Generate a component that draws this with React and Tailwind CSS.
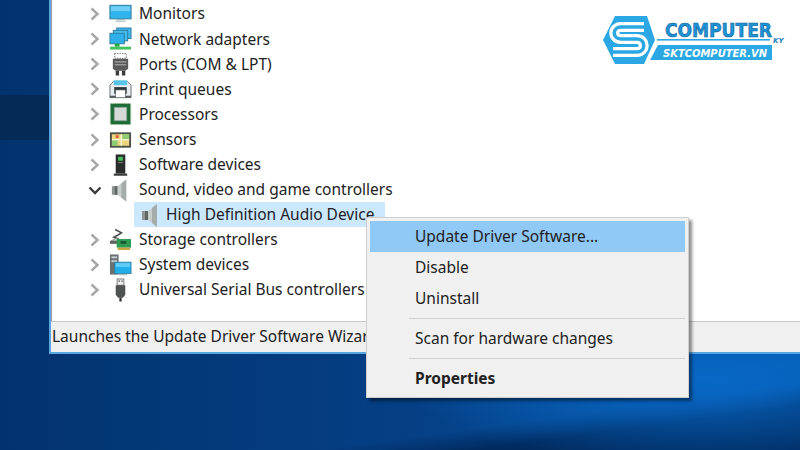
import React from "react";

const Chevron = ({ open }) => (
  <svg width="16" height="16" viewBox="0 0 16 16" className="shrink-0">
    {open ? (
      <path d="M1.5 5.5 L7 11 L12.5 5.5" fill="none" stroke="#3c3c3c" strokeWidth="2.4" />
    ) : (
      <path d="M3.5 2.5 L9.5 8 L3.5 13.5" fill="none" stroke="#a6a6a6" strokeWidth="2.4" />
    )}
  </svg>
);

const Monitor = () => (
  <svg width="24" height="24" viewBox="0 0 24 24">
    <rect x="1" y="3" width="22" height="14" fill="#2fb4ee" stroke="#3a86a8" strokeWidth="1.2" />
    <rect x="2" y="4" width="20" height="5" fill="#6ed0f5" />
    <rect x="8" y="17.5" width="8" height="1" fill="#8aa8b8" />
    <rect x="6.5" y="19" width="11" height="1.2" fill="#b4c4cc" />
  </svg>
);

const Network = () => (
  <svg width="24" height="24" viewBox="0 0 24 24">
    <rect x="8" y="0.5" width="15" height="11" fill="#3cb8ee" stroke="#2f7da0" />
    <rect x="4.5" y="3" width="15" height="11" fill="#45beef" stroke="#2f7da0" />
    <rect x="1" y="6" width="15" height="11" fill="#2fb0ea" stroke="#2f7da0" />
    <rect x="6" y="17" width="5" height="3" fill="#28a745" />
    <rect x="1" y="20" width="22" height="3" fill="#42c45c" />
  </svg>
);

const Port = () => (
  <svg width="24" height="24" viewBox="0 0 24 24">
    <rect x="6" y="1" width="12" height="5" fill="#fff" stroke="#777" strokeWidth="1" strokeDasharray="1.5 1" />
    <path d="M4 6.5 H20 V17 L17 19 H7 L4 17 Z" fill="#5a5a5a" />
    <rect x="6" y="9" width="12" height="1.5" fill="#9a9a9a" />
    <rect x="6" y="12" width="12" height="1.5" fill="#9a9a9a" />
    <rect x="7" y="19" width="3.5" height="5" fill="#3c3c3c" />
    <rect x="13.5" y="19" width="3.5" height="5" fill="#3c3c3c" />
  </svg>
);

const Printer = () => (
  <svg width="24" height="24" viewBox="0 0 24 24">
    <path d="M1 8 L5 4 H19 L23 8 V21 H1 Z" fill="#e8ecee" stroke="#6a7176" />
    <rect x="5" y="3" width="14" height="5" fill="#55c4e6" />
    <rect x="5.5" y="10" width="13" height="7" fill="#2f3a40" />
    <rect x="7" y="13" width="10" height="8" fill="#ffffff" stroke="#555" strokeWidth="0.6" />
    <rect x="1" y="19" width="6" height="2" fill="#55595c" />
    <rect x="17" y="19" width="6" height="2" fill="#55595c" />
  </svg>
);

const Cpu = () => (
  <svg width="24" height="24" viewBox="0 0 24 24">
    <rect x="1.5" y="1" width="21" height="22" fill="#1f6b38" />
    <rect x="1" y="1" width="22" height="22" fill="none" stroke="#bcd8a8" strokeWidth="0.8" strokeDasharray="1 1" />
    <rect x="5.5" y="5" width="13" height="14" fill="#d5dad7" stroke="#8aa596" strokeWidth="0.8" />
  </svg>
);

const Sensor = () => (
  <svg width="24" height="24" viewBox="0 0 24 24">
    <rect x="1" y="4" width="22" height="16" fill="#4b4f4a" />
    <rect x="3" y="6" width="18" height="12" fill="#ecd77e" />
    <rect x="3" y="12" width="6" height="6" fill="#8ecb72" />
    <rect x="14" y="6" width="7" height="5" fill="#8ecb72" />
    <rect x="7" y="7" width="3" height="3" fill="#e0563a" />
    <rect x="12" y="6" width="1.6" height="12" fill="#f6f1d0" />
    <rect x="3" y="11" width="18" height="1.4" fill="#f6f1d0" />
  </svg>
);

const Software = () => (
  <svg width="24" height="24" viewBox="0 0 24 24">
    <rect x="7" y="1" width="10" height="20" fill="#2a2d2b" />
    <rect x="9.5" y="3.5" width="5" height="4" fill="#45c25a" />
    <rect x="9.5" y="9" width="5" height="1" fill="#7d8a80" />
    <rect x="5" y="21" width="14" height="2.2" fill="#3a3a3a" />
  </svg>
);

const Speaker = () => (
  <svg width="24" height="24" viewBox="0 0 24 24">
    <path d="M3 8 H9 V17 H3 Z" fill="#8d9491" />
    <path d="M6 8 H9 V17 H6 Z" fill="#5f6663" />
    <path d="M9 8 L18 1 V24 L9 17 Z" fill="#c7cdca" />
    <path d="M13 5 L18 1 V24 L13 20 Z" fill="#a5acaa" />
  </svg>
);

const Storage = () => (
  <svg width="24" height="24" viewBox="0 0 24 24">
    <path d="M6.5 1 L13 4.5 L9 7 L5 9 L10 11" fill="none" stroke="#4a4f4d" strokeWidth="1.6" />
    <path d="M2 13 L8 10 L12 13 H4 Z" fill="#d9dedb" stroke="#555" strokeWidth="0.6" />
    <rect x="1" y="13" width="10" height="3" fill="#5c625f" />
    <rect x="8" y="11" width="15" height="9" fill="#2f9c54" />
    <rect x="12" y="13" width="6" height="3" fill="#1c5a33" />
    <rect x="9" y="20" width="13" height="2.4" fill="#c9a63c" />
  </svg>
);

const SystemDev = () => (
  <svg width="24" height="24" viewBox="0 0 24 24">
    <rect x="1" y="1" width="9" height="21" fill="#6a6f70" />
    <rect x="2.5" y="3" width="6" height="2" fill="#c9cfd0" />
    <rect x="2.5" y="7" width="6" height="2" fill="#c9cfd0" />
    <rect x="6" y="9" width="17" height="12" fill="#22aee8" stroke="#2d7a9c" strokeWidth="0.8" />
    <rect x="7" y="10" width="15" height="4" fill="#60cdf4" />
    <rect x="10" y="21.5" width="9" height="1.3" fill="#a9bcc6" />
  </svg>
);

const Usb = () => (
  <svg width="24" height="24" viewBox="0 0 24 24">
    <rect x="8.5" y="0.5" width="7" height="6.5" fill="#f0f0f0" stroke="#777" strokeWidth="1" />
    <rect x="10" y="2" width="1.5" height="1.5" fill="#666" />
    <rect x="12.8" y="2" width="1.5" height="1.5" fill="#666" />
    <path d="M7 7 H17 V17 L14.5 20 H9.5 L7 17 Z" fill="#4f5250" />
    <rect x="10.8" y="20" width="2.4" height="4" fill="#333" />
  </svg>
);

const Row = ({ icon: Icon, label, open }) => (
  <div className="flex h-[25.1px] items-center">
    <span className="flex w-[21px] shrink-0 items-center">
      <Chevron open={open} />
    </span>
    <span className="flex w-[23px] shrink-0 justify-center">
      <Icon />
    </span>
    <span className="ml-[7px] whitespace-nowrap">{label}</span>
  </div>
);

const Logo = () => (
  <svg width="190" height="56" viewBox="0 0 190 56" className="absolute left-[600px] top-[12px]">
    <path d="M15 4 H47 L55 28 L44 52 H15 L3 28 Z" fill="#2ba8e4" />
    <path d="M44 15 H21 C12 15 12 27 21 27 H37 C46 27 46 40 37 40 H13" fill="none" stroke="#fff" strokeWidth="10" />
    <path d="M44 15 H21 C12 15 12 27 21 27 H37 C46 27 46 40 37 40 H13" fill="none" stroke="#2ba8e4" strokeWidth="3.5" />
    <rect x="57" y="27" width="113" height="1.6" fill="#2ba8e4" />
    <path d="M58 33 H172 V48 H50 Z" fill="#2ba8e4" />
    <text x="65" y="25" textLength="107" lengthAdjust="spacingAndGlyphs" fontFamily="'DejaVu Sans'" fontWeight="700" fontSize="19" fill="#1e94d8" stroke="#0f5d92" strokeWidth="0.6">COMPUTER</text>
    <text x="173" y="31" fontFamily="'DejaVu Sans'" fontWeight="700" fontSize="7" fontStyle="italic" fill="#1e7fc0">KY</text>
    <text x="63" y="45" textLength="104" lengthAdjust="spacingAndGlyphs" fontFamily="'DejaVu Sans'" fontWeight="700" fontSize="10.5" fontStyle="italic" fill="#ffffff">SKTCOMPUTER.VN</text>
  </svg>
);

const MenuItem = ({ label, active, bold }) => (
  <div className={`flex h-[31px] items-center pl-[45px] ${active ? "bg-[#90c8f6]" : ""} ${bold ? "font-bold" : ""}`}>
    {label}
  </div>
);

const Sep = () => (
  <div className="flex h-[9px] items-center pl-[39px]">
    <div className="h-px w-full bg-[#d0d0d0]" />
  </div>
);

export default function App() {
  return (
    <div
      className="relative h-[450px] w-[800px] overflow-hidden bg-[radial-gradient(ellipse_300px_90px_at_88%_84%,#0868c6_0%,transparent_100%),linear-gradient(172deg,transparent_0%,transparent_88%,#012a5e_92%),linear-gradient(90deg,#03336e_0%,#053f84_50%,#0759ad_100%)] text-[15.5px] text-[#222]"
      style={{ fontFamily: "'Noto Sans', sans-serif" }}
    >
      <div className="absolute left-0 top-[95px] h-[45px] w-[49px] bg-[#062a56]" />
      <div className="relative ml-[49px] flex h-[354px] flex-col border-b-2 border-l-2 border-[#58a6e0]">
        <div className="flex-1 border-l border-[#a0a0a0] bg-white pl-[36px] pt-[1.5px]">
          <Row icon={Monitor} label="Monitors" />
          <Row icon={Network} label="Network adapters" />
          <Row icon={Port} label="Ports (COM & LPT)" />
          <Row icon={Printer} label="Print queues" />
          <Row icon={Cpu} label="Processors" />
          <Row icon={Sensor} label="Sensors" />
          <Row icon={Software} label="Software devices" />
          <Row icon={Speaker} label="Sound, video and game controllers" open />
          <div className="ml-[46px] flex h-[25.1px] w-[251px] items-center bg-[#cce8ff] pl-[5px]">
            <span className="flex w-[24px] shrink-0 justify-center">
              <Speaker />
            </span>
            <span className="ml-[3px] whitespace-nowrap">High Definition Audio Device</span>
          </div>
          <Row icon={Storage} label="Storage controllers" />
          <Row icon={SystemDev} label="System devices" />
          <Row icon={Usb} label="Universal Serial Bus controllers" />
        </div>
        <div className="flex h-[31px] items-center border-t border-[#c8c8c8] bg-[#f0f0f0] pl-[1px]">
          <span className="whitespace-nowrap">Launches the Update Driver Software Wizard for the selected device.</span>
        </div>
      </div>
      <Logo />
      <div className="absolute left-[366px] top-[217px] w-[323px] border border-[#cfcfcf] bg-[#f0f0f0] p-[3px] shadow-[3px_3px_3px_rgba(0,0,0,0.45)]">
        <MenuItem label="Update Driver Software..." active />
        <MenuItem label="Disable" />
        <MenuItem label="Uninstall" />
        <Sep />
        <MenuItem label="Scan for hardware changes" />
        <Sep />
        <MenuItem label="Properties" bold />
      </div>
    </div>
  );
}
